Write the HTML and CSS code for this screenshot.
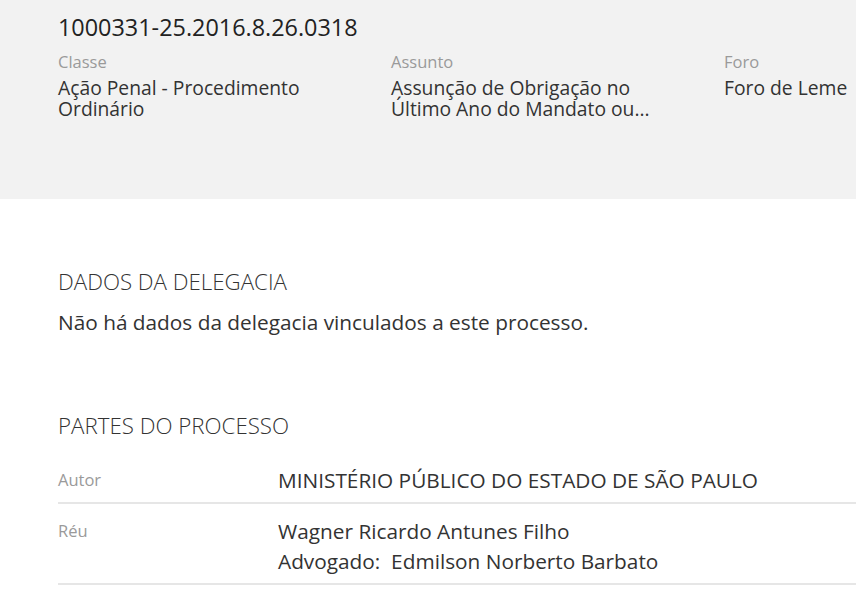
FILE: index.html
```html
<!DOCTYPE html>
<html lang="pt-BR">
<head>
  <meta charset="UTF-8" />
  <meta name="viewport" content="width=device-width, initial-scale=1.0" />
  <title>Processo 1000331-25.2016.8.26.0318</title>
  <link rel="stylesheet" href="styles.css">
</head>
<body>
  <div class="header">
    <div class="numero">1000331-25.2016.8.26.0318</div>
    <div class="info">
      <div class="campo">
        <span class="rotulo">Classe</span>
        <span class="valor">Ação Penal - Procedimento Ordinário</span>
      </div>
      <div class="campo">
        <span class="rotulo">Assunto</span>
        <span class="valor">Assunção de Obrigação no Último Ano do Mandato ou...</span>
      </div>
      <div class="campo">
        <span class="rotulo">Foro</span>
        <span class="valor">Foro de Leme</span>
      </div>
    </div>
  </div>

  <div class="content">
    <div class="secao delegacia">
      <h2>DADOS DA DELEGACIA</h2>
      <p>Não há dados da delegacia vinculados a este processo.</p>
    </div>

    <div class="secao partes">
      <h2>PARTES DO PROCESSO</h2>
      <div class="parte">
        <div class="tipo">Autor</div>
        <div class="nome">MINISTÉRIO PÚBLICO DO ESTADO DE SÃO PAULO</div>
      </div>
      <div class="parte">
        <div class="tipo">Réu</div>
        <div class="nome">
          Wagner Ricardo Antunes Filho<br>
          Advogado:&nbsp; Edmilson Norberto Barbato
        </div>
      </div>
    </div>
  </div>
</body>
</html>
```

FILE: styles.css
```css
body {
  margin: 0;
  background: #fff;
  color: #333;
  font-family: "Open Sans", "Noto Sans", Arial, sans-serif;
  overflow: hidden;
}

.header {
  background: #f2f2f2;
  height: 199px;
  box-sizing: border-box;
  padding: 12px 0 0 58px;
}

.numero {
  font-size: 23.4px;
  line-height: 30px;
  color: #222;
}

.info {
  display: grid;
  grid-template-columns: 333px 333px 1fr;
  margin-top: 10px;
}

.campo {
  display: flex;
  flex-direction: column;
  min-width: 0;
}

.rotulo {
  font-size: 16.5px;
  line-height: 20px;
  color: #9a9a9a;
}

.valor {
  margin-top: 5px;
  font-size: 19.3px;
  line-height: 21px;
  color: #333;
  max-width: 272px;
}

.content {
  padding: 0 0 0 58px;
}

.secao h2 {
  margin: 0;
  font-size: 22.3px;
  font-weight: 300;
  line-height: 28px;
  color: #333;
}

.delegacia {
  padding-top: 69px;
}

.delegacia p {
  margin: 12px 0 0;
  font-size: 20.8px;
  line-height: 28px;
}

.partes {
  padding-top: 76px;
}

.partes h2 {
  margin-bottom: 13px;
}

.parte {
  display: flex;
  border-bottom: 2px solid #e6e6e6;
  padding: 12px 0 7px;
}

.tipo {
  width: 220px;
  flex-shrink: 0;
  font-size: 16.5px;
  line-height: 30px;
  color: #9a9a9a;
}

.nome {
  font-size: 20.8px;
  line-height: 30px;
  color: #333;
}
```
